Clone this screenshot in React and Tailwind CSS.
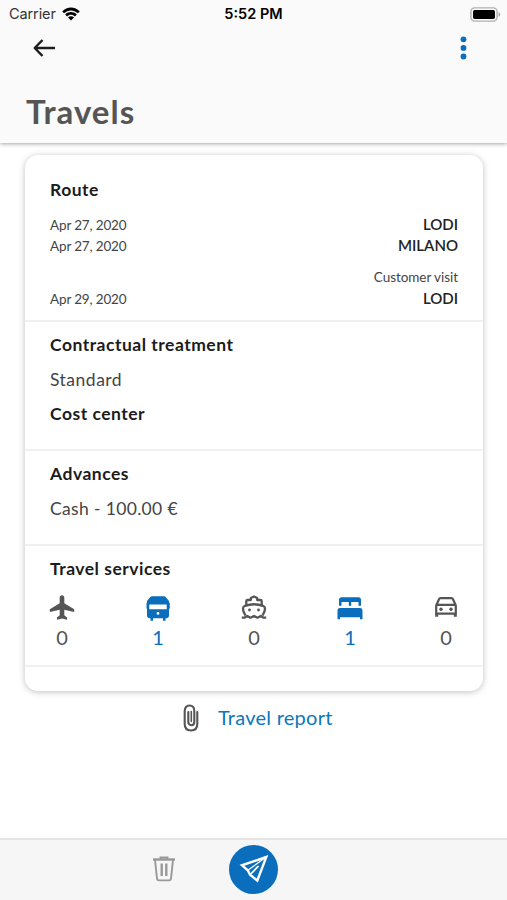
import React from 'react';
import clsx from 'clsx';

const WifiIcon = () => (
  <svg width="18" height="14" viewBox="0 0 18 14">
    <path d="M0.2 4.4 C5-0.8 13-0.8 17.8 4.4 L15.9 6.3 C12 2.4 6 2.4 2.1 6.3Z" />
    <path d="M3.2 7.500 C6.300 4.300 11.700 4.300 14.800 7.500 L12.900 9.400 C10.800 7.300 7.200 7.300 5.100 9.400Z" />
    <path d="M6 10.400 C7.700 8.800 10.300 8.800 12 10.400 L9 13.500Z" />
  </svg>
);

const BatteryIcon = () => (
  <svg width="31" height="15" viewBox="0 0 31 15">
    <rect x="0.9" y="0.9" width="26.2" height="13.2" rx="3.8" fill="#fafafa" stroke="#b0b0b0" strokeWidth="1.4" />
    <rect x="3" y="3" width="22" height="9" rx="1.8" />
    <path d="M28.6 5.2 C30.6 5.8 30.6 9.2 28.6 9.8Z" fill="#a0a0a0" />
  </svg>
);

const BackIcon = () => (
  <svg width="24" height="20" viewBox="0 0 24 20" fill="none" stroke="#1c1c1c" strokeWidth="2.4" strokeLinejoin="round">
    <path d="M23 10H3M10.500 2L2.700 10L10.500 18" />
  </svg>
);

const PlaneIcon = () => (
  <svg width="26" height="26" viewBox="0 0 26 26" fill="#555">
    <path d="M13 .3c-1.400 0-2.300 1-2.300 2.300V8.200L.8 14.300V17L10.700 14.800V20.300L8 22.500V24.700L13 23.600L18 24.700V22.500L15.300 20.300V14.800L25.200 17V14.300L15.300 8.200V2.600C15.300 1.300 14.400 .3 13 .3z" />
  </svg>
);

const BusIcon = () => (
  <svg width="26" height="26" viewBox="0 0 26 26" fill="#0a6ebd">
    <path fillRule="evenodd" d="M7.500 1.200H18.500C19.500 1.200 20.200 1.500 20.900 2.300L24 6V7.500L24.800 8V13.500L24 14V20.500C24 22 23.200 22.900 22 23.200H20.500V25.800H18V23.200H8V25.800H5.500V23.200H4C2.800 22.900 2 22 2 20.500V14L1.500 13.500V8L2 7.500V6L5.100 2.300C5.800 1.500 6.500 1.200 7.500 1.200zM4.300 9.600V14.200H21.700V9.600zM13 17a1.400 1.400 0 1 0 0 2.800a1.400 1.400 0 1 0 0-2.800z" />
  </svg>
);

const ShipIcon = () => (
  <svg width="26" height="26" viewBox="0 0 26 26" fill="none" stroke="#555" strokeWidth="2.300" strokeLinejoin="round">
    <path d="M5.300 10.500V6.300C5.300 5.400 5.800 5 6.600 5H9.800V3L13 1.500L16.200 3V5H19.400C20.200 5 20.700 5.400 20.700 6.300V10.500" />
    <path d="M4.500 20.500C3.500 18.500 2 16.500 2 13.700C2 11.700 2.700 11.300 4 10.800C10 8.700 16 8.700 22 10.800C23.300 11.300 24 11.700 24 13.700C24 16.500 22.500 18.500 21.500 20.500" />
    <path d="M.8 22.700H3.500L6.200 20.900L9.500 22.700L13 20.900L16.500 22.700L19.800 20.900L22.500 22.700H25.200" />
    <g fill="#555" stroke="none">
      <circle cx="8.500" cy="15" r="1.400" />
      <circle cx="17.500" cy="15" r="1.400" />
    </g>
  </svg>
);

const BedIcon = () => (
  <svg width="26" height="26" viewBox="0 0 26 26" fill="#0a6ebd">
    <path d="M4.500 2.200H21.500C23 2.200 24 3.200 24 4.700V10.700H21.500V7H14.200V10.700H11.800V7H4.500V10.700H2V4.700C2 3.200 3 2.200 4.500 2.200z" />
    <path d="M3 13H23C24.800 13 25.500 14 25.500 16V24.300H23V22.300H3V24.300H.5V16C.5 14 1.200 13 3 13z" />
  </svg>
);

const CarIcon = () => (
  <svg width="26" height="26" viewBox="0 0 26 26" fill="none" stroke="#555" strokeWidth="2.200" strokeLinejoin="round">
    <path d="M3.200 18.700V10.500L6 4.200C6.300 3.400 6.800 3.200 7.500 3.200H18.500C19.200 3.200 19.700 3.400 20 4.200L22.800 10.500V18.700zM3.500 9.800H22.500" />
    <path d="M3.700 18.500V21.700M22.300 18.500V21.700" strokeWidth="3" />
    <g fill="#555" stroke="none">
      <circle cx="8" cy="14.200" r="1.700" />
      <circle cx="18" cy="14.200" r="1.700" />
    </g>
  </svg>
);

const ClipIcon = () => (
  <svg width="16" height="28" viewBox="0 0 16 28" fill="none" stroke="#555" strokeWidth="2.100" strokeLinecap="round">
    <path d="M14.300 8V20C14.300 24 12 26.500 8 26.500S1.700 24 1.700 20V7C1.700 3.500 3.500 1.500 6.500 1.500S11.300 3.500 11.300 7V18C11.300 20 10.200 21.200 8.400 21.200S5.300 20 5.300 18V8" />
    <path d="M8.300 7.500V17.500" strokeWidth="1.600" />
  </svg>
);

const TrashIcon = () => (
  <svg width="24" height="26" viewBox="0 0 24 26" fill="none" stroke="#999" strokeWidth="1.900">
    <path d="M1 3.500H23" strokeWidth="2.400" />
    <path d="M8.500 3V1.500H15.500V3" />
    <path d="M3 4L5 22.500C5.100 23.700 5.900 24.400 7.100 24.400H16.900C18.100 24.400 18.900 23.700 19 22.500L21 4" />
    <path d="M9.700 7.500V20M14.300 7.500V20" strokeWidth="2.400" />
  </svg>
);

const SendIcon = () => (
  <svg width="30" height="30" viewBox="0 0 30 30" fill="none" stroke="#fff" strokeWidth="2.400">
    <path d="M27.300 3L3 11.300L8.800 16.300L11 20.800L18.300 26.500z" />
    <path d="M27.300 3L8.800 16.300" strokeWidth="1.200" />
    <path d="M11.300 20.500L19.500 12" strokeWidth="1.800" />
  </svg>
);

const services = [
  { name: 'plane', Icon: PlaneIcon, count: 0 },
  { name: 'bus', Icon: BusIcon, count: 1 },
  { name: 'ship', Icon: ShipIcon, count: 0 },
  { name: 'hotel', Icon: BedIcon, count: 1 },
  { name: 'car', Icon: CarIcon, count: 0 },
];

const RouteRow = ({ date, place }) => (
  <div className="flex h-[21px] items-center justify-between">
    <span className="pt-px text-[13.5px] tracking-[-0.15px] text-[#444]">{date}</span>
    <span className="text-[15px] font-semibold text-[#222]">{place}</span>
  </div>
);

const Title = ({ children }) => (
  <h2 className="text-[17.5px] leading-6 font-bold tracking-[0.5px] text-[#1c1c1c]">{children}</h2>
);

export default function App() {
  return (
    <div className="flex h-[900px] w-[507px] flex-col overflow-hidden bg-white font-['Lato',sans-serif] whitespace-nowrap">
      <header className="relative h-[143px] shrink-0 bg-[#fafafa] shadow-[0_1px_4px_rgba(0,0,0,0.35)]">
        {/* Status bar */}
        <div className="grid h-7 grid-cols-3 items-center pr-[6px] pl-[9px] font-['Inter',sans-serif] text-[14.5px] text-black">
          <div className="flex items-center gap-[6px]">
            <span className="tracking-[-0.1px] text-[#333]">Carrier</span>
            <WifiIcon />
          </div>
          <span className="text-center font-semibold">
            <span className="-ml-[3px]">5:52 PM</span>
          </span>
          <div className="flex justify-end">
            <BatteryIcon />
          </div>
        </div>

        <div className="flex h-10 items-center justify-between pr-[40px] pl-8">
          <BackIcon />
          <svg width="7" height="24" viewBox="0 0 7 24" fill="#0a6ebd">
            <circle cx="3.500" cy="3.300" r="2.900" />
            <circle cx="3.500" cy="11.900" r="2.900" />
            <circle cx="3.500" cy="20.500" r="2.900" />
          </svg>
        </div>
        <h1 className="mt-[23px] pl-[26px] text-[33px] leading-10 font-bold tracking-[1px] text-[#555]">Travels</h1>
      </header>

      <main className="flex-1 px-[25px] pt-3">
        <div className="h-[536px] w-[458px] rounded-[13px] bg-white shadow-[0_1px_6px_rgba(0,0,0,0.25)]">
          <section className="h-[165px] px-[25px] pt-[23px]">
            <Title>Route</Title>
            <div className="mt-3">
              <RouteRow date="Apr 27, 2020" place="LODI" />
              <RouteRow date="Apr 27, 2020" place="MILANO" />
              <div className="mt-[11px] mb-px flex h-5 items-center justify-end text-[13.5px] tracking-[-0.05px] text-[#444]">Customer visit</div>
              <RouteRow date="Apr 29, 2020" place="LODI" />
            </div>
          </section>

          <section className="h-[129px] border-t-2 border-[#f0f0f0] px-[25px] pt-[11px]">
            <Title>Contractual treatment</Title>
            <p className="mt-[11px] mb-[10px] text-[17.5px] leading-6 tracking-[0.5px] text-[#444]">Standard</p>
            <Title>Cost center</Title>
          </section>

          <section className="h-[95px] border-t-2 border-[#f0f0f0] px-[25px] pt-[11px]">
            <Title>Advances</Title>
            <p className="mt-[11px] text-[17.5px] leading-6 tracking-[0.35px] text-[#444]">Cash - 100.00 €</p>
          </section>

          <section className="h-[121px] border-t-2 border-[#f0f0f0] px-[24px] pt-[11px]">
            <div className="pl-px">
              <Title>Travel services</Title>
            </div>
            <div className="mt-[14px] flex justify-between">
              {services.map(({ name, Icon, count }) => (
                <div key={name} className="flex w-[26px] flex-col items-center">
                  <Icon />
                  <span className={clsx('mt-[4px] text-[20px] leading-6', count > 0 ? 'text-[#0a6ebd]' : 'text-[#555]')}>
                    {count}
                  </span>
                </div>
              ))}
            </div>
          </section>
          <div className="border-t-2 border-[#f0f0f0]" />
        </div>

        <div className="mt-[13px] flex items-center gap-[19px] pl-[158px]">
          <ClipIcon />
          <span className="-mt-[3px] text-[20px] leading-7 tracking-[0.25px] text-[#0a78bd]">Travel report</span>
        </div>
      </main>

      <footer className="flex h-[62px] shrink-0 items-center border-t-2 border-[#e4e4e4] bg-[#f7f6f7] pb-[2px] pl-[152px]">
        <TrashIcon />
        <button className="ml-[53px] flex h-[49px] w-[49px] items-center justify-center rounded-full bg-[#0a6ebd]">
          <SendIcon />
        </button>
      </footer>
    </div>
  );
}
